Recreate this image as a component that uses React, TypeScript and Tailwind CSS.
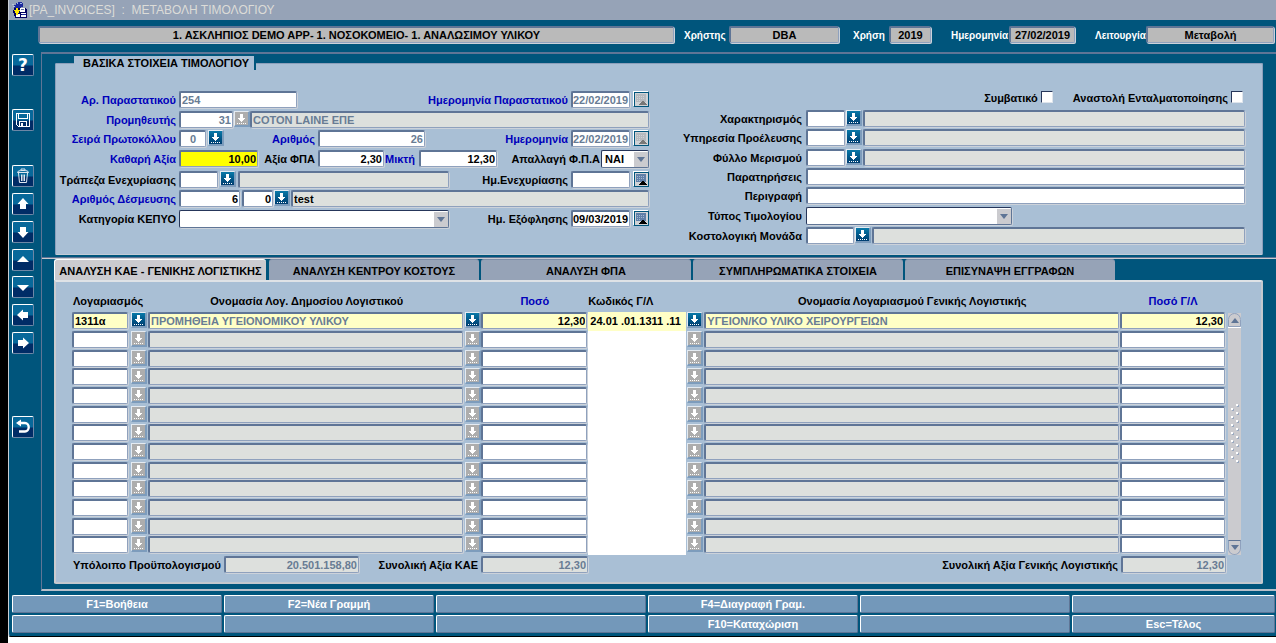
import React from "react";
import { clsx } from "clsx";

const FIELD =
  "h-[17px] min-w-0 shrink-0 rounded-[2px] border border-t-2 border-l-2 border-[#8fa1bd] border-t-[#5f7596] border-l-[#5f7596] text-[11px] leading-[14px] font-bold shadow-[1px_1px_0_#ccd2da] outline-none";
const SELECT =
  "block h-[18px] w-full appearance-none rounded-[2px] border border-[#5f7596] border-t-[#26365a] border-l-[#26365a] bg-white pl-[3px] text-[11px] leading-4 font-bold text-black shadow-[1px_1px_0_#ccd2da] outline-none";

type Tone = "edit" | "locked" | "shown" | "status" | "key" | "current" | "currentShown";

const TONES: Record<Tone, string> = {
  edit: "bg-white text-black",
  locked: "bg-white text-[#687c94]",
  shown: "bg-[#dde0dd] text-[#687c94]",
  status: "bg-[#bababa] text-black",
  key: "bg-[#ffff00] text-black",
  current: "bg-[#ffffc6] text-black",
  currentShown: "bg-[#ffffc6] text-[#687c94]",
};

type FieldProps = {
  id?: string;
  name?: string;
  value?: string;
  tone?: Tone;
  tight?: boolean;
  className?: string;
};

function Field({ id, name, value = "", tone = "edit", tight = false, className }: FieldProps) {
  return (
    <input
      id={id}
      aria-label={name}
      defaultValue={value}
      readOnly={tone === "shown" || tone === "status" || tone === "locked"}
      className={clsx(FIELD, tight ? "px-0" : "px-px", TONES[tone], className)}
    />
  );
}

type LabelProps = { htmlFor: string; blue?: boolean; className?: string; children: React.ReactNode };

function Label({ htmlFor, blue, className, children }: LabelProps) {
  return (
    <label
      htmlFor={htmlFor}
      className={clsx(
        "pt-px text-right text-[11px] leading-4 font-bold whitespace-nowrap",
        blue ? "text-[#0000bb]" : "text-black",
        className,
      )}
    >
      {children}
    </label>
  );
}

function LovButton({ off = false, className }: { off?: boolean; className?: string }) {
  return (
    <button
      type="button"
      aria-label="Λίστα τιμών"
      className={clsx(
        "block size-4 shrink-0 border border-r-2 border-b-2 border-t-[#e4ebf2] border-l-[#e4ebf2] border-r-[#7d9cbc] border-b-[#7d9cbc]",
        off ? "bg-[#adadad]" : "bg-gradient-to-b from-[#0a79a8] to-[#003d70]",
        className,
      )}
    >
      <svg viewBox="0 0 13 13" className="block size-[13px]" shapeRendering="crispEdges" fill="#fff">
        <path d="M5 2h3v4h2v1h-1v1h-1v1h-1v1h-1v-1h-1v-1h-1v-1h-1v-1h2z" />
        <path d="M2 11h1v1h-1zM4 11h1v1h-1zM6 11h1v1h-1zM8 11h1v1h-1zM10 11h1v1h-1z" />
      </svg>
    </button>
  );
}

function CalendarButton({ off = false }: { off?: boolean }) {
  return (
    <button
      type="button"
      aria-label="Ημερολόγιο"
      className="ml-[3px] block size-4 shrink-0 border border-t-white border-l-white border-r-[#00557c] border-b-[#00557c] bg-[#d0d3d6]"
    >
      <svg viewBox="0 0 14 14" className="block size-[14px]" shapeRendering="crispEdges">
        <path d="M0 14V0h14v1H1v13z" fill="#00557c" />
        <path d="M2 2h10v8h-10z" fill={off ? "#b5b9be" : "#5f7fa8"} />
        <path
          d="M3 4h1v1h-1zM5 4h1v1h-1zM7 4h1v1h-1zM9 4h1v1h-1zM3 6h1v1h-1zM5 6h1v1h-1zM7 6h1v1h-1zM9 6h1v1h-1zM3 8h1v1h-1zM5 8h1v1h-1z"
          fill={off ? "#d0d3d6" : "#a3b8d0"}
        />
        <path d="M9 9h1v1h1v1h1v1h1v1h-8v-1h1v-1h1v-1h1v-1h1z" fill={off ? "#777" : "#000"} />
      </svg>
    </button>
  );
}

type SelectProps = { id: string; options: string[]; className?: string };

function Select({ id, options, className }: SelectProps) {
  return (
    <div className={clsx("relative shrink-0", className)}>
      <select id={id} className={SELECT}>
        {options.map((o) => (
          <option key={o}>{o}</option>
        ))}
      </select>
      <span className="pointer-events-none absolute top-0.5 right-px flex h-[15px] w-[14px] items-center justify-center bg-[#cbcbcf]">
        <svg viewBox="0 0 8 5" className="h-[5px] w-2" fill="#5f7596">
          <path d="M0 0h8L4 5z" />
        </svg>
      </span>
    </div>
  );
}

function ToolButton({ name, className, children }: { name: string; className?: string; children: React.ReactNode }) {
  return (
    <button
      type="button"
      aria-label={name}
      className={clsx(
        "block size-[22px] shrink-0 rounded-[2px] border border-t-white border-l-white border-r-[#6d87a6] border-b-[#6d87a6] bg-gradient-to-b from-[#07689a] from-50% to-[#002c66] to-55%",
        className,
      )}
    >
      <svg viewBox="0 0 20 20" className="block size-5" fill="#fff">
        {children}
      </svg>
    </button>
  );
}

function Toolbar() {
  return (
    <nav className="flex w-8 shrink-0 flex-col pt-[34px] pl-[3px]">
      <ToolButton name="Βοήθεια">
        <text x="10" y="16" textAnchor="middle" className="font-['DejaVu_Sans'] text-[17px] font-bold">
          ?
        </text>
      </ToolButton>
      <ToolButton name="Αποθήκευση" className="mt-[33px]">
        <path
          fillRule="evenodd"
          shapeRendering="crispEdges"
          d="M3 3h14v14H5v-1H4v-1H3zM4 4v11h1v1h1v-5h8v5h2V4h-1v5H5V4zM6 4v4h8V4zM7 12v4h6v-4zM8 13h2v3h-2z"
        />
      </ToolButton>
      <ToolButton name="Διαγραφή" className="mt-[34px]">
        <path
          d="M8 4.500v-1.500h4v1.500M4.500 6.500c0-1.500 2-2 5.500-2s5.500.500 5.500 2zM5.500 7l1 9.500h7l1-9.500M8.500 8.500v6.500M10 8.500v6.500M11.500 8.500v6.500"
          fill="none"
          stroke="#dfe7f0"
        />
      </ToolButton>
      <div className="mt-[6px] flex h-[161px] flex-col justify-between">
        <ToolButton name="Προηγούμενη εγγραφή">
          <path d="M10 4l5.500 6H13v5H7v-5H4.500z" />
        </ToolButton>
        <ToolButton name="Επόμενη εγγραφή">
          <path d="M10 16l5.500-6H13V5H7v5H4.500z" />
        </ToolButton>
        <ToolButton name="Προηγούμενο μπλοκ">
          <path d="M10 6l6 6H4z" />
        </ToolButton>
        <ToolButton name="Επόμενο μπλοκ">
          <path d="M10 14l6-6H4z" />
        </ToolButton>
        <ToolButton name="Αριστερά">
          <path d="M4 10l6-5.500V7h5v6h-5v2.500z" />
        </ToolButton>
        <ToolButton name="Δεξιά">
          <path d="M16 10l-6-5.500V7H5v6h5v2.500z" />
        </ToolButton>
      </div>
      <ToolButton name="Επιστροφή" className="mt-[62px]">
        <path d="M5 6h7a3.500 4 0 0 1 0 8.500H6" fill="none" stroke="#fff" strokeWidth="2.400" />
        <path d="M3 6l5-3.500v7z" />
      </ToolButton>
    </nav>
  );
}

function TitleBar() {
  return (
    <header className="flex h-5 items-center bg-[#96a3b7] pl-[3px]">
      <svg viewBox="0 0 16 16" className="size-4" shapeRendering="crispEdges">
        <path d="M4 1h2V0h4v1h1v4H9v2H4V6H2V3h2z" fill="#1c2a9c" />
        <path d="M5 1h1v1H5zM8 1h2v1H8z" fill="#9db5e8" />
        <path d="M0 2h2v1H0zM1 4h2v1H1z" fill="#b9c4d6" />
        <path d="M2 6h12v1h1v9H3v-2H2v-3H1V8h1z" fill="#000060" />
        <path d="M8 6h5v4H8zM4 12h4v3H4zM9 11h5v1H9zM9 13h5v2H9z" fill="#fff" />
        <path d="M9 7h3v1H9z" fill="#6070a0" />
        <path d="M4 6h2v2h2v1H7v2H6v2H4v-2H3v-2H2V8h2z" fill="#ffe800" />
        <path d="M10 12h4v1h-4z" fill="#1c2a9c" />
      </svg>
      <h1 className="ml-px text-[12px] leading-5 whitespace-pre text-[#dcdcd8]">
        {"[PA_INVOICES]  :  ΜΕΤΑΒΟΛΗ ΤΙΜΟΛΟΓΙΟΥ"}
      </h1>
    </header>
  );
}

const STATUS_LABEL = "text-[10px] leading-[19px] font-bold text-white whitespace-nowrap";

function StatusBar() {
  return (
    <div className="flex h-8 items-start pt-[6px] pr-0.5 pl-[30px]">
      <Field name="Εφαρμογή" tone="status" value="1. ΑΣΚΛΗΠΙΟΣ DEMO APP- 1. ΝΟΣΟΚΟΜΕΙΟ- 1. ΑΝΑΛΩΣΙΜΟΥ ΥΛΙΚΟΥ" className="flex-1 text-center" />
      <label htmlFor="user" className={clsx(STATUS_LABEL, "ml-[10px] w-[45px]")}>Χρήστης</label>
      <Field id="user" tone="status" value="DBA" className="w-[110px] text-center" />
      <label htmlFor="year" className={clsx(STATUS_LABEL, "ml-[14px] w-[36px]")}>Χρήση</label>
      <Field id="year" tone="status" value="2019" className="w-[42px] text-center" />
      <label htmlFor="today" className={clsx(STATUS_LABEL, "ml-5 w-[58px]")}>Ημερομηνία</label>
      <Field id="today" tone="status" value="27/02/2019" className="w-[66px] text-center" />
      <label htmlFor="mode" className={clsx(STATUS_LABEL, "ml-5 w-[51px]")}>Λειτουργία</label>
      <Field id="mode" tone="status" value="Μεταβολή" className="w-[128px] text-center" />
    </div>
  );
}

const FORM_LABEL = "mr-[3px] w-[120px] shrink-0";
const SIDE_LABEL = "mr-1 w-[153px] shrink-0";
const CHECKBOX =
  "size-3 appearance-none border border-t-[#26365a] border-l-[#26365a] border-r-[#dfe5ec] border-b-[#dfe5ec] bg-white";

function InvoiceForm() {
  return (
    <fieldset className="mr-[13px] ml-[13px] rounded-[2px] border border-[#8c9fbb] border-b-[#c4ccd6] bg-[#a9bfd5]">
      <legend className="ml-[18px] h-[14px] border-r-2 border-[#00557c] bg-[#a9bfd5] pr-[5px] pl-[9px] text-[11px] leading-[14px] font-bold">
        ΒΑΣΙΚΑ ΣΤΟΙΧΕΙΑ ΤΙΜΟΛΟΓΙΟΥ
      </legend>
      <div className="flex items-start pt-[21px] pr-[17px] pb-[10px]">
        <div className="flex h-[137px] w-[593px] shrink-0 flex-col justify-between">
          <div className="flex">
            <Label htmlFor="docno" blue className={FORM_LABEL}>Αρ. Παραστατικού</Label>
            <Field id="docno" tone="locked" value="254" className="w-[118px]" />
            <Label htmlFor="docdate" blue className="mr-[3px] flex-1">Ημερομηνία Παραστατικού</Label>
            <Field id="docdate" tight tone="locked" value="22/02/2019" className="w-[59px]" />
            <CalendarButton off />
          </div>
          <div className="flex">
            <Label htmlFor="supplier" blue className={FORM_LABEL}>Προμηθευτής</Label>
            <Field id="supplier" tone="locked" value="31" className="w-[54px] text-right" />
            <LovButton off className="ml-px" />
            <Field name="Όνομα προμηθευτή" tone="shown" value="COTON LAINE ΕΠΕ" className="flex-1" />
          </div>
          <div className="flex">
            <Label htmlFor="series" blue className={FORM_LABEL}>Σειρά Πρωτοκόλλου</Label>
            <Field id="series" tone="locked" value="0" className="w-[27px] text-center" />
            <LovButton className="ml-0.5" />
            <Label htmlFor="number" blue className="mr-[3px] w-[91px]">Αριθμός</Label>
            <Field id="number" tone="locked" value="26" className="w-[107px] text-right" />
            <Label htmlFor="date" blue className="mr-[3px] flex-1">Ημερομηνία</Label>
            <Field id="date" tight tone="locked" value="22/02/2019" className="w-[59px]" />
            <CalendarButton off />
          </div>
          <div className="flex">
            <Label htmlFor="net" blue className={FORM_LABEL}>Καθαρή Αξία</Label>
            <Field id="net" tone="key" value="10,00" className="w-[79px] text-right" />
            <Label htmlFor="vat" className="mr-[3px] w-[57px]">Αξία ΦΠΑ</Label>
            <Field id="vat" value="2,30" className="w-[66px] text-right" />
            <Label htmlFor="gross" blue className="mr-1 w-[31px]">Μικτή</Label>
            <Field id="gross" value="12,30" className="w-[78px] text-right" />
            <Label htmlFor="exempt" className="mr-px flex-1">Απαλλαγή Φ.Π.Α</Label>
            <Select id="exempt" options={["ΝΑΙ", "ΟΧΙ"]} className="w-12" />
          </div>
          <div className="flex">
            <Label htmlFor="bank" className={FORM_LABEL}>Τράπεζα Ενεχυρίασης</Label>
            <Field id="bank" className="w-[39px]" />
            <LovButton className="mx-0.5" />
            <Field name="Όνομα τράπεζας" tone="shown" className="w-[211px]" />
            <Label htmlFor="pledge" className="mr-[3px] flex-1">Ημ.Ενεχυρίασης</Label>
            <Field id="pledge" tight className="w-[59px]" />
            <CalendarButton />
          </div>
          <div className="flex">
            <Label htmlFor="commit" blue className={FORM_LABEL}>Αριθμός Δέσμευσης</Label>
            <Field id="commit" value="6" className="w-[61px] text-right" />
            <Field name="Υποαριθμός δέσμευσης" value="0" className="ml-0.5 w-[31px] text-right" />
            <LovButton className="mx-px" />
            <Field name="Περιγραφή δέσμευσης" tone="shown" value="test" className="flex-1 text-black" />
          </div>
          <div className="flex">
            <Label htmlFor="kepyo" className={FORM_LABEL}>Κατηγορία ΚΕΠΥΟ</Label>
            <Select id="kepyo" options={[""]} className="w-[270px]" />
            <Label htmlFor="paid" className="mr-[3px] flex-1">Ημ. Εξόφλησης</Label>
            <Field id="paid" tight value="09/03/2019" className="w-[59px]" />
            <CalendarButton />
          </div>
        </div>

        <div className="min-w-0 flex-1">
          <div className="flex h-[18px] items-start justify-end pr-0.5">
            <label htmlFor="contract" className="mr-[3px] text-[11px] leading-[14px] font-bold">Συμβατικό</label>
            <input id="contract" type="checkbox" className={clsx(CHECKBOX, "mr-5")} />
            <label htmlFor="suspend" className="mr-[3px] text-[11px] leading-[14px] font-bold">Αναστολή Ενταλματοποίησης</label>
            <input id="suspend" type="checkbox" className={CHECKBOX} />
          </div>
          <div className="mt-px flex h-[134px] flex-col justify-between">
            {[
              ["kind", "Χαρακτηρισμός"],
              ["origin", "Υπηρεσία Προέλευσης"],
              ["share", "Φύλλο Μερισμού"],
            ].map(([id, text]) => (
              <div key={id} className="flex">
                <Label htmlFor={id} className={SIDE_LABEL}>{text}</Label>
                <Field id={id} className="w-[39px]" />
                <LovButton className="mx-px" />
                <Field name={text} tone="shown" className="flex-1" />
              </div>
            ))}
            <div className="flex">
              <Label htmlFor="notes" className={SIDE_LABEL}>Παρατηρήσεις</Label>
              <Field id="notes" className="flex-1" />
            </div>
            <div className="flex">
              <Label htmlFor="descr" className={SIDE_LABEL}>Περιγραφή</Label>
              <Field id="descr" className="flex-1" />
            </div>
            <div className="flex">
              <Label htmlFor="type" className={SIDE_LABEL}>Τύπος Τιμολογίου</Label>
              <Select id="type" options={[""]} className="w-[206px]" />
            </div>
            <div className="flex">
              <Label htmlFor="unit" className={SIDE_LABEL}>Κοστολογική Μονάδα</Label>
              <Field id="unit" className="w-[48px]" />
              <LovButton className="mx-px" />
              <Field name="Περιγραφή μονάδας" tone="shown" className="flex-1" />
            </div>
          </div>
        </div>
      </div>
    </fieldset>
  );
}

const TABS = [
  "ΑΝΑΛΥΣΗ ΚΑΕ - ΓΕΝΙΚΗΣ ΛΟΓΙΣΤΙΚΗΣ",
  "ΑΝΑΛΥΣΗ ΚΕΝΤΡΟΥ ΚΟΣΤΟΥΣ",
  "ΑΝΑΛΥΣΗ ΦΠΑ",
  "ΣΥΜΠΛΗΡΩΜΑΤΙΚΑ ΣΤΟΙΧΕΙΑ",
  "ΕΠΙΣΥΝΑΨΗ ΕΓΓΡΑΦΩΝ",
];

const LINES = [
  {
    account: "1311α",
    name: "ΠΡΟΜΗΘΕΙΑ ΥΓΕΙΟΝΟΜΙΚΟΥ ΥΛΙΚΟΥ",
    amount: "12,30",
    code: "24.01 .01.1311 .11",
    ledger: "ΥΓΕΙΟΝ/ΚΟ ΥΛΙΚΟ ΧΕΙΡΟΥΡΓΕΙΩΝ",
    ledgerAmount: "12,30",
  },
  ...Array.from({ length: 12 }, () => ({
    account: "",
    name: "",
    amount: "",
    code: "",
    ledger: "",
    ledgerAmount: "",
  })),
];

const CELL = "block w-full";

function LinesTable() {
  return (
    <table className="w-full table-fixed border-collapse text-[11px] font-bold">
      <thead>
        <tr className="h-[22px] leading-[22px] whitespace-nowrap">
          <th scope="col" className="w-[58px] p-0 pl-px text-left">Λογαριασμός</th>
          <th className="w-[18px] p-0" />
          <th scope="col" className="w-[27.500%] p-0">Ονομασία Λογ. Δημοσίου Λογιστικού</th>
          <th className="w-4 p-0" />
          <th scope="col" className="w-[107px] p-0 text-[#0000bb]">Ποσό</th>
          <th scope="col" className="w-[98px] p-0 text-left">Κωδικός Γ/Λ</th>
          <th className="w-[18px] p-0" />
          <th scope="col" className="p-0">Ονομασία Λογαριασμού Γενικής Λογιστικής</th>
          <th scope="col" className="w-[106px] p-0 text-[#0000bb]">Ποσό Γ/Λ</th>
        </tr>
      </thead>
      <tbody>
        {LINES.map((line, i) => {
          const on = i === 0;
          const edit: Tone = on ? "current" : "edit";
          const shown: Tone = on ? "currentShown" : "shown";
          return (
            <tr key={i} className={clsx("align-top", i % 3 === 2 ? "h-[18px]" : "h-[19px]")}>
              <td className="p-0 pr-0.5"><Field name="Λογαριασμός" tone={edit} value={line.account} className={CELL} /></td>
              <td className="p-0 pl-px"><LovButton off={!on} /></td>
              <td className="p-0 pr-0.5"><Field name="Ονομασία" tone={shown} value={line.name} className={CELL} /></td>
              <td className="p-0"><LovButton off={!on} /></td>
              <td className="p-0 pr-px"><Field name="Ποσό" tone={edit} value={line.amount} className={clsx(CELL, "text-right")} /></td>
              <td className={clsx("p-0", on ? "bg-[#ffffc6]" : "bg-white")}>
                <input aria-label="Κωδικός Γ/Λ" defaultValue={line.code} className="block h-[17px] w-full bg-transparent pl-0.5 text-[11px] font-bold outline-none" />
              </td>
              <td className="p-0 pl-px"><LovButton off={!on} /></td>
              <td className="p-0 pr-px"><Field name="Ονομασία Γ/Λ" tone={shown} value={line.ledger} className={CELL} /></td>
              <td className="p-0 pr-px"><Field name="Ποσό Γ/Λ" tone={edit} value={line.ledgerAmount} className={clsx(CELL, "text-right")} /></td>
            </tr>
          );
        })}
      </tbody>
    </table>
  );
}

function Scroller() {
  return (
    <div className="mt-[23px] ml-0.5 flex w-[13px] shrink-0 flex-col bg-[#cbcbcf]">
      <button type="button" aria-label="Πάνω" className="flex h-[14px] items-center justify-center rounded-t-full border border-[#8fa1bd] bg-[#cbcbcf] shadow-[0_1px_0_#fff]">
        <svg viewBox="0 0 8 5" className="h-[5px] w-2" fill="#5f7596"><path d="M0 5h8L4 0z" /></svg>
      </button>
      <div className="flex flex-1 items-center justify-center">
        <svg viewBox="0 0 9 60" className="h-[60px] w-[9px]" shapeRendering="crispEdges">
          {Array.from({ length: 15 }, (_, i) => (
            <g key={i}>
              <rect x={i % 2 ? 2 : 7} y={i * 4 + 1} width="2" height="2" fill="#9aa9c0" />
              <rect x={i % 2 ? 1 : 6} y={i * 4} width="2" height="2" fill="#fff" />
            </g>
          ))}
        </svg>
      </div>
      <button type="button" aria-label="Κάτω" className="flex h-[15px] items-center justify-center rounded-b-full border border-[#8fa1bd] border-t-[#5f7596] bg-[#cbcbcf]">
        <svg viewBox="0 0 8 5" className="h-[5px] w-2" fill="#5f7596"><path d="M0 0h8L4 5z" /></svg>
      </button>
    </div>
  );
}

function Analysis() {
  return (
    <section className="mr-[13px] ml-3 pb-[5px]">
      <div role="tablist" className="flex gap-0.5">
        {TABS.map((tab, i) => (
          <button
            key={tab}
            type="button"
            role="tab"
            aria-selected={i === 0}
            className={clsx(
              "h-[21px] rounded-t-[3px] text-center text-[11px] leading-[22px] font-bold whitespace-nowrap",
              i === 0
                ? "mr-px w-[212px] border-t border-l border-white bg-[#cbcbcf]"
                : "w-[210px] border-t border-[#7d8da8] bg-[#96a3b7]",
            )}
          >
            {tab}
          </button>
        ))}
      </div>
      <div className="rounded-[2px] rounded-tl-none border-2 border-t-[#dfe2e6] border-r-[#c4c8ce] border-b-[#c4c8ce] border-l-[#cbcbcf] bg-[#a9bfd5] pt-2 pr-5 pb-[9px] pl-4">
        <div className="flex">
          <div className="min-w-0 flex-1">
            <LinesTable />
          </div>
          <Scroller />
        </div>
        <div className="mr-[15px] -ml-1 flex pt-px">
          <Label htmlFor="budget" className="mr-[3px] w-[153px] shrink-0">Υπόλοιπο Προϋπολογισμού</Label>
          <Field id="budget" tone="shown" value="20.501.158,80" className="w-[135px] text-right" />
          <Label htmlFor="totalkae" className="mr-[3px] w-[119px] shrink-0">Συνολική Αξία ΚΑΕ</Label>
          <Field id="totalkae" tone="shown" value="12,30" className="w-[107px] text-right" />
          <Label htmlFor="totalgl" className="mr-[3px] flex-1">Συνολική Αξία Γενικής Λογιστικής</Label>
          <Field id="totalgl" tone="shown" value="12,30" className="w-[105px] text-right" />
        </div>
      </div>
    </section>
  );
}

const KEYS = [
  "F1=Βοήθεια", "F2=Νέα Γραμμή", "", "F4=Διαγραφή Γραμ.", "", "",
  "", "", "", "F10=Καταχώριση", "", "Esc=Τέλος",
];

function KeyBar() {
  return (
    <footer className="grid grid-cols-[repeat(5,30fr)_29fr] gap-0.5 pt-1 pr-px pb-[3px] pl-[3px]">
      {KEYS.map((key, i) => (
        <button
          key={i}
          type="button"
          className="h-[18px] rounded-[2px] border border-t-white border-l-white border-r-[#5f7596] border-b-[#5f7596] bg-[#7398ba] text-[11px] leading-4 font-bold text-white"
        >
          {key}
        </button>
      ))}
    </footer>
  );
}

export default function App() {
  return (
    <div className="flex min-h-screen bg-white font-['Liberation_Sans',Arial,sans-serif] text-black">
      <div className="w-2 shrink-0 bg-black" />
      <div className="min-w-0 flex-1">
        <div className="rounded-bl-[3px] border-b border-l border-b-black border-l-[#cbd0d6] bg-[#00557c]">
          <TitleBar />
          <div className="flex">
            <Toolbar />
            <main className="min-w-0 flex-1">
              <div className="-ml-[33px]">
                <StatusBar />
              </div>
              <div className="border-t-2 border-b-2 border-l border-t-[#5f7596] border-b-[#b9c0ca] border-l-[#5f7596] pt-[2px]">
                <InvoiceForm />
                <div className="mt-0.5 h-0.5 border-b border-[#cbcbcf] bg-[#5f7596]" />
                <Analysis />
              </div>
            </main>
          </div>
          <KeyBar />
        </div>
      </div>
    </div>
  );
}
